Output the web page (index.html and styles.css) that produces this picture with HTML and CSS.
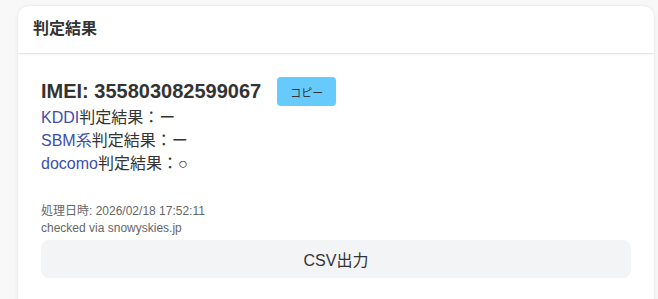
FILE: index.html
```html
<!DOCTYPE html>
<html lang="ja">

<head>
    <meta charset="UTF-8">
    <meta name="viewport" content="width=device-width, initial-scale=1.0">
    <title>判定結果</title>
    <link rel="stylesheet" href="styles.css">
</head>

<body>
    <div class="result-card">
        <div class="card-header">判定結果</div>

        <div class="card-body">
            <div class="imei-row">
                <span class="imei">IMEI: 355803082599067</span>
                <button class="copy-button">コピー</button>
            </div>

            <ul class="carrier-list">
                <li><a href="#">KDDI</a>判定結果：ー</li>
                <li><a href="#">SBM系</a>判定結果：ー</li>
                <li><a href="#">docomo</a>判定結果：○</li>
            </ul>

            <div class="meta">
                <div>処理日時: 2026/02/18 17:52:11</div>
                <div>checked via snowyskies.jp</div>
            </div>

            <button class="csv-button">CSV出力</button>
        </div>
    </div>
</body>

</html>
```

FILE: styles.css
```css
body {
    font-family: "Liberation Sans", Arial, "Noto Sans CJK JP", sans-serif;
    margin: 0;
    padding: 5px 3px 0 17px;
    background-color: #f8f8f8;
    color: #333;
}

.result-card {
    background-color: #fff;
    border-radius: 12px;
    border: 1px solid #eeeeee;
    box-shadow: 0 1px 4px rgba(0, 0, 0, 0.05);
    overflow: hidden;
}

.card-header {
    height: 47px;
    line-height: 46px;
    padding: 0 15px;
    font-size: 16px;
    font-weight: bold;
    color: #333;
    border-bottom: 1px solid #e6e6e6;
    box-shadow: 0 1px 2px rgba(0, 0, 0, 0.04);
}

.card-body {
    padding: 23px 23px 40px;
}

.imei-row {
    display: flex;
    align-items: center;
    gap: 16px;
    height: 29px;
}

.imei {
    font-size: 20px;
    font-weight: bold;
    color: #333;
}

.copy-button {
    background-color: #66cbfc;
    border: none;
    border-radius: 4px;
    color: #333;
    font-family: "Noto Sans CJK JP", sans-serif;
    font-size: 11px;
    height: 29px;
    padding: 0 13px;
    cursor: pointer;
}

.carrier-list {
    list-style-type: none;
    margin: 0;
    padding: 0;
    font-size: 16px;
    line-height: 23px;
    color: #333;
}

.carrier-list a {
    color: #3d4fa8;
    text-decoration: none;
}

.meta {
    margin-top: 28px;
    font-size: 12px;
    line-height: 17px;
    color: #666;
}

.csv-button {
    display: block;
    width: 100%;
    height: 38px;
    margin-top: 3px;
    background-color: #f3f4f6;
    border: none;
    border-radius: 8px;
    color: #333;
    font-family: "Liberation Sans", Arial, "Noto Sans CJK JP", sans-serif;
    font-size: 16px;
    cursor: pointer;
}
```
